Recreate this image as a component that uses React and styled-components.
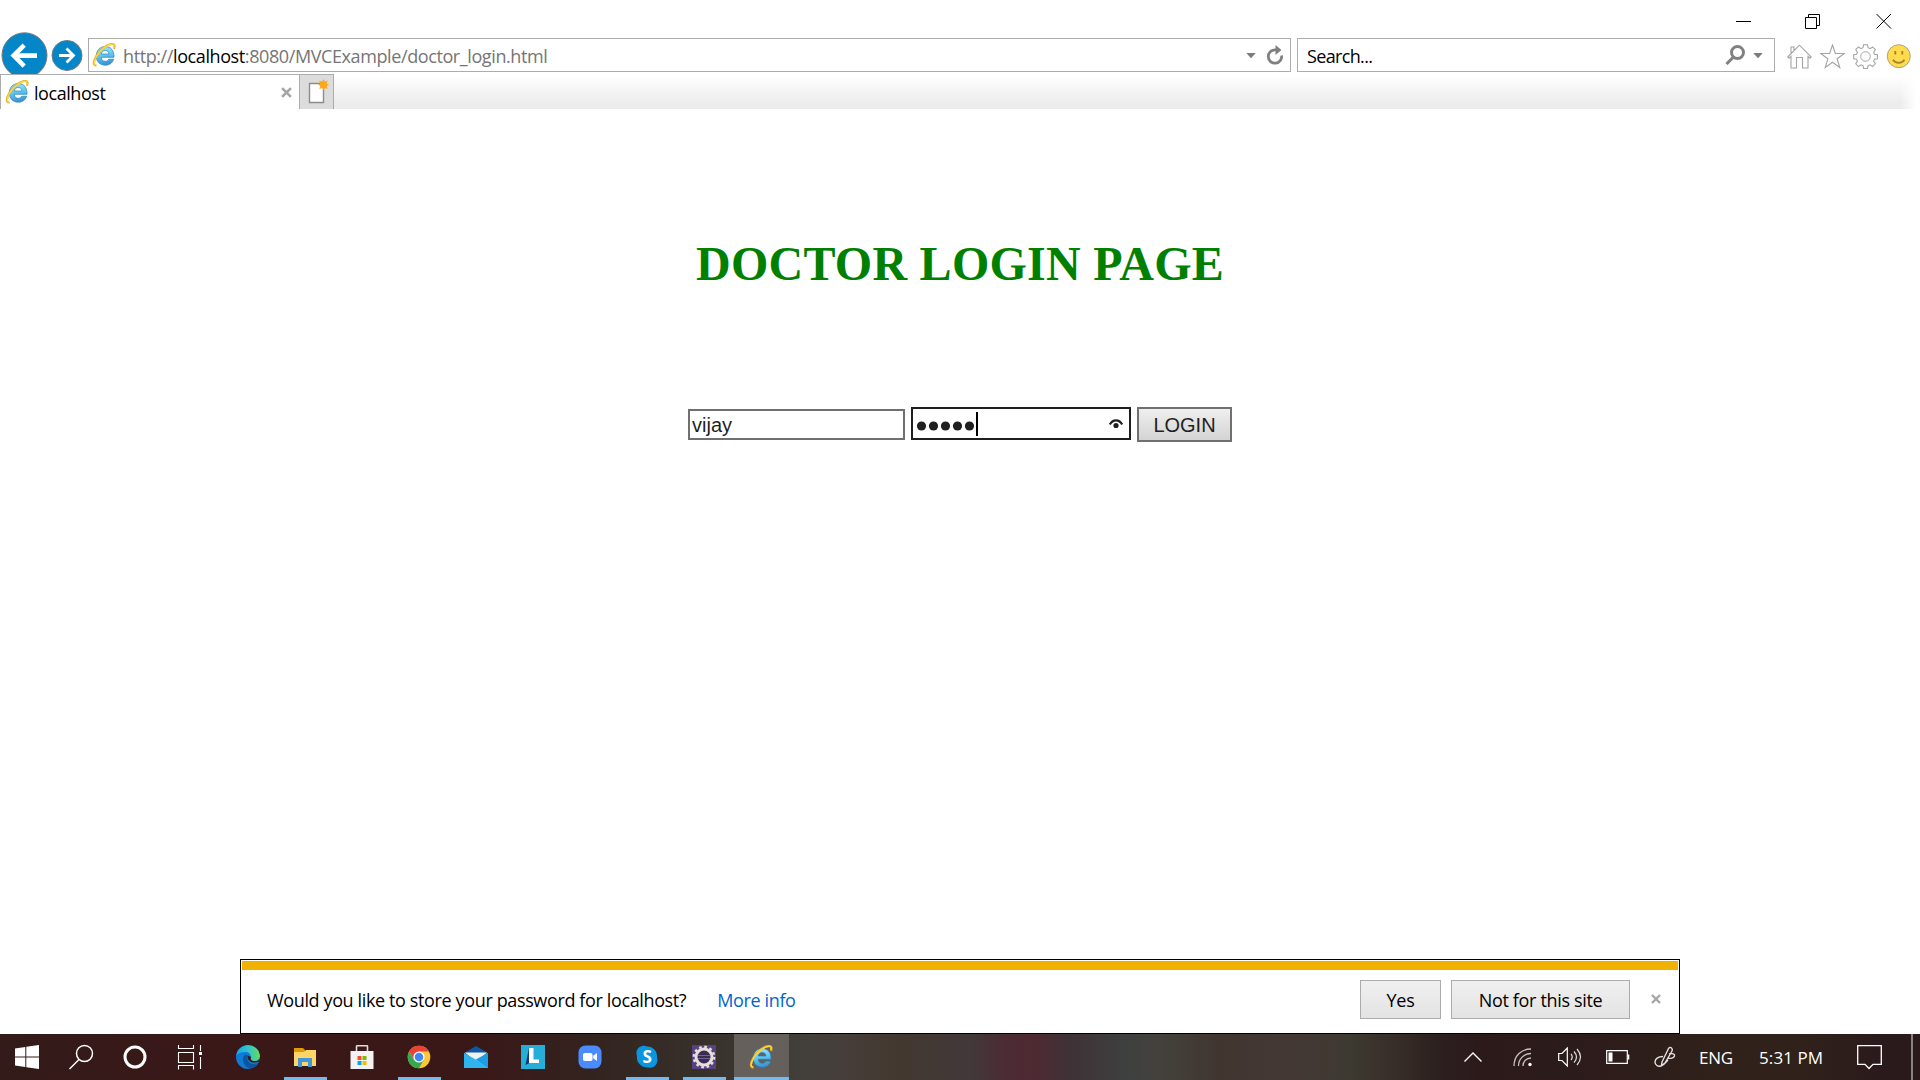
import React from 'react';
import styled, { createGlobalStyle } from 'styled-components';

const Global = createGlobalStyle`
  * { box-sizing: border-box; }
  body { margin: 0; background: #fff; overflow: hidden; }
  svg { display: block; flex: none; }
  button { margin: 0; font: inherit; }
`;
const ui = `"Open Sans", "Noto Sans", sans-serif`;

const Screen = styled.div`
  width: 1920px; height: 1080px; display: flex; flex-direction: column;
  background: #fff; font-family: ${ui}; color: #000; overflow: hidden;
`;
const TitleBar = styled.header`
  height: 38px; display: flex; justify-content: flex-end; gap: 53px;
  padding: 13px 28px 0 0;
  svg:last-child { margin-left: 2px; }
`;
const NavBar = styled.nav`height: 36px; display: flex; align-items: flex-start;`;
const NavButtons = styled.div`
  width: 88px; height: 36px; overflow: visible;
  svg { margin-top: -7px; }
`;
const Field = styled.div`
  width: ${p => p.$w}px; height: 34px; border: 1px solid #acacac; background: #fff;
  display: flex; align-items: center; margin-right: ${p => p.$gap}px;
  padding: 0 ${p => p.$pr}px 0 ${p => p.$pl}px;
`;
const Label = styled.span`
  font-size: ${p => p.$size || 18}px; letter-spacing: ${p => p.$ls || 0}px; line-height: 24px;
  color: ${p => p.$color || '#000'}; white-space: pre; margin-left: ${p => p.$ml || 0}px;
  padding-top: ${p => p.$pt || 0}px;
`;
const Host = styled.b`font-weight: 400; color: #000;`;
const Spacer = styled.div`flex: 1;`;
const Gap = styled.div`flex: 0 0 ${p => p.$w}px;`;
const Tools = styled.div`display: flex; gap: 8px; padding-top: 6px;`;

const TabRow = styled.div`
  height: 35px; display: flex; position: relative;
  background: linear-gradient(#fff 5%, #f5f5f5 45%, #ececec 85%);
  &::after {
    content: ''; position: absolute; right: 0; top: 0; width: 20px; height: 35px;
    background: linear-gradient(90deg, #fff0, #fff 80%);
  }
`;
const Tab = styled.div`
  width: 300px; border: 1px solid #acacac; border-bottom: 0; background: #fff;
  display: flex; align-items: center; padding: 0 7px 0 4px;
`;
const NewTab = styled.div`
  width: 34px; border: 1px solid #acacac; border-width: 1px 1px 0 0; background: #dcdcdc;
  padding: 4px 0 0 7px;
`;

const Page = styled.main`flex: 1; display: flex; flex-direction: column; align-items: center;`;
const Title = styled.h1`
  margin: 126px 0 0; height: 58px; font: bold 48px/58px "Liberation Serif", serif;
  letter-spacing: 0.26px; color: #008000; white-space: nowrap;
`;
const Form = styled.div`
  display: flex; align-items: center; margin-top: 114px; height: 35px; gap: 6px;
  font: 20px "Liberation Sans", sans-serif; color: #1f1f1f;
`;
const Input = styled.div`
  width: ${p => p.$w}px; height: ${p => p.$h}px; border: 2px solid ${p => p.$c}; background: #fff;
  display: flex; align-items: center; padding: 1px 6px 0 2px; line-height: 24px;
  margin-top: ${p => p.$mt || 0}px;
`;
const Submit = styled.button`
  width: 95px; height: 35px; border: 2px solid #707070; padding: 2px 0 0; color: #1f1f1f;
  background: linear-gradient(#efefef, #d4d4d4);
`;

const Notice = styled.section`
  width: 1440px; height: 75px; border: 1px solid #000; margin-left: 240px; background: #fff;
  padding: 1px 1px 0;
`;
const Stripe = styled.div`height: 9px; background: #f2b000;`;
const NoticeBody = styled.div`height: 58px; display: flex; align-items: center; padding: 0 17px 0 25px;`;
const NoticeButton = styled.button`
  width: ${p => p.$w}px; height: 39px; border: 1px solid #acacac; padding: 2px 0 0;
  background: linear-gradient(#f0f0f0, #e3e3e3); margin-right: ${p => p.$mr}px;
`;

const Taskbar = styled.footer`
  height: 46px; display: flex; align-items: stretch; color: #fff;
  background: linear-gradient(90deg, #321b19 0, #3a1818 200px, #3a1818 480px, #33231f 590px, #37302a 700px, #423f3b 800px,
    #453e3a 840px, #43382f 900px, #41393a 970px, #4c2b34 1005px, #4e2932 1035px, #3e3237 1070px, #3e403f 1125px,
    #43413c 1160px, #40362f 1220px, #443835 1290px, #3d3a31 1350px, #362c27 1400px, #2c1f1f 1440px, #2c1a1b 1480px,
    #2d1c1b 1600px, #30211a 1720px, #30211a 1800px, #2b1a1b 1880px, #2b1a1b 1920px);
`;
const Task = styled.div`
  width: 54px; display: flex; align-items: center; justify-content: center;
`;
const AppButton = styled.div`
  width: ${p => (p.$active ? 55 : 43)}px; margin: 0 ${p => (p.$active ? 1 : 7)}px; height: 46px;
  display: flex; align-items: center; justify-content: center;
  background: ${p => (p.$active ? '#65605c' : 'transparent')};
  border-bottom: 3px solid ${p => (p.$open ? '#76b9ed' : 'transparent')};
  background-clip: padding-box; padding: 3px 1px 0 0;
`;
const Tray = styled.div`display: flex; align-items: center; margin-left: auto; width: 456px;`;
const TrayItem = styled.div`width: ${p => p.$w}px; display: flex; align-items: center;`;
const ShowDesktop = styled.div`width: 7px; height: 46px; border-left: 2px solid #8a8280;`;

const IE = ({ s = 24, id }) => (
  <svg width={s} height={s} viewBox="0 0 24 24">
    <defs>
      <linearGradient id={id} x1="0" y1="0" x2="0.2" y2="1">
        <stop offset="0" stopColor="#a5e9fd" /><stop offset=".5" stopColor="#62caf3" /><stop offset="1" stopColor="#3a98d6" />
      </linearGradient>
    </defs>
    <path d="M22 14.3H9.2c.2 2.6 1.7 4 4 4 1.800 0 2.900-.8 3.500-2.100h5c-1.200 3.800-4.300 6-8.400 6-5.400 0-9-3.600-9-9.200 0-5.500 3.600-9.500 9-9.500 5.600 0 9 4 8.700 10.800ZM9.300 11h7.700c-.2-2.200-1.500-3.500-3.700-3.500-2.300 0-3.600 1.300-4 3.500Z" fill={`url(#${id})`} stroke="#2c80b8" strokeWidth=".7" />
    <path d="M4.500 22.300C1.500 22.800.6 19.500 4.300 13 8.200 6.200 15.500.8 20.300 1c2.300.1 2.700 2 1.700 4.800" fill="none" stroke="#eab02a" strokeWidth="2.200" />
    <path d="M4.300 21.900C1.800 22 1.400 19 4.600 13.200 8.500 6.500 15.500 1.300 20.200 1.400c1.800.1 2.100 1.400 1.500 3.400" fill="none" stroke="#ffd83a" strokeWidth="1.300" />
  </svg>
);
const Cross = ({ s = 10, w = 2.4, c = '#a6a6a6' }) => (
  <svg width={s} height={s} viewBox="0 0 10 10"><path d="M1 1l8 8M9 1l-8 8" stroke={c} strokeWidth={w} /></svg>
);
const Caret = () => <svg width="10" height="8" viewBox="0 0 10 8"><path d="M.3 2h9.400L5 7.300Z" fill="#7b7b7b" /></svg>;

export default function App() {
  return (
    <Screen>
      <Global />
      <TitleBar>
        <svg width="16" height="16"><path d="M0 8.500h15" stroke="#000" /></svg>
        <svg width="16" height="17"><path d="M.5 4.500h11v11H.5zM3.500 4.500v-3h11v11h-3" fill="none" stroke="#000" /></svg>
        <svg width="16" height="17"><path d="M.5 1l14.500 14.500M15 1L.5 15.500" stroke="#000" /></svg>
      </TitleBar>
      <NavBar>
        <NavButtons>
          <svg width="88" height="43" viewBox="0 31 88 43">
            <circle cx="24.500" cy="55.300" r="22.500" fill="#0586c8" stroke="#77797b" />
            <path d="M37 55.600H14M24.200 45.100L13.700 55.600 24.200 66.100" fill="none" stroke="#fff" strokeWidth="4.600" />
            <circle cx="67" cy="55.500" r="15" fill="#0586c8" stroke="#77797b" />
            <path d="M59 55.500h14M66.500 48.500l7 7-7 7" fill="none" stroke="#fff" strokeWidth="2.800" />
          </svg>
        </NavButtons>
        <Field $w={1203} $gap={6} $pl={3} $pr={6}>
          <IE id="ieAddr" />
          <Label $ml={7} $color="#757575" $ls={-0.4} $pt={2}>http://<Host>localhost</Host>:8080/MVCExample/doctor_login.html</Label>
          <Spacer />
          <Caret />
          <Gap $w={10} />
          <svg width="18" height="20" viewBox="0 0 18 20"><path d="M15.600 10.500A6.700 6.700 0 1 1 9 4.800h2" fill="none" stroke="#808080" strokeWidth="2.800" /><path d="M9.500 0l6 5-6 5Z" fill="#808080" /></svg>
        </Field>
        <Field $w={478} $gap={12} $pl={9} $pr={11}>
          <Label $ls={-0.65} $pt={2}>Search...</Label>
          <Spacer />
          <svg width="20" height="20" viewBox="0 0 20 20"><circle cx="12.500" cy="7.500" r="6" fill="none" stroke="#808080" strokeWidth="2.900" /><path d="M8.500 12l-7 7" stroke="#808080" strokeWidth="3" /></svg>
          <Gap $w={8} />
          <Caret />
        </Field>
        <Tools>
          <svg width="25" height="25" viewBox="0 0 25 25"><path d="M.8 13L12.500 1.200 24.200 13l-1.200 1.200-2-1.800V24h-5.500V13.500h-6V24H4V12.400l-2 1.800ZM4 9.800V3h3v3.500" fill="#fff" stroke="#a4a4a4" strokeWidth="1.100" /></svg>
          <svg width="25" height="25" viewBox="0 0 25 25"><path d="M12.500 1l2.900 8.500h8.900l-7.200 5.300 2.700 8.700-7.300-5.300-7.300 5.300 2.700-8.700L.7 9.500h8.900Z" fill="#fff" stroke="#a4a4a4" strokeWidth="1.100" /></svg>
          <svg width="25" height="25" viewBox="0 0 25 25"><path d="M10.500 1h4l.6 3 2 .9 2.600-1.700 2.800 2.700-1.700 2.700.8 2 3 .6v4l-3 .5-.8 2 1.700 2.700-2.800 2.800-2.600-1.700-2 .8-.6 3h-4l-.6-3-2-.8-2.600 1.700-2.800-2.800 1.700-2.700-.8-2-3-.5v-4l3-.6.8-2-1.700-2.700 2.800-2.700 2.600 1.700 2-.9Z" transform="translate(.3 -.2) scale(.98)" fill="#fff" stroke="#a4a4a4" strokeWidth="1.100" /><circle cx="12.500" cy="12.500" r="4.800" fill="#fff" stroke="#a4a4a4" /></svg>
          <svg width="25" height="25" viewBox="0 0 25 25"><circle cx="12.800" cy="12.200" r="11.500" fill="#ffdb4d" stroke="#aaa181" /><path d="M9.300 7v3.500M16.300 7v3.500" stroke="#a08425" strokeWidth="1.800" /><path d="M7 15.800c2.500 4 9 4 11.500 0" fill="none" stroke="#a08425" strokeWidth="1.700" /></svg>
        </Tools>
      </NavBar>
      <TabRow>
        <Tab>
          <IE id="ieTab" />
          <Label $ml={5} $ls={-0.45} $pt={2}>localhost</Label>
          <Spacer />
          <Cross s={11} />
        </Tab>
        <NewTab>
          <svg width="24" height="28" viewBox="0 0 24 28"><path d="M2.500 4.500h14v19h-14Z" fill="#fff" stroke="#8c8c8c" strokeWidth="1.400" /><path d="M16.500 0l1.300 2.600 2.900-1-1 2.900 2.300 1.300-2.300 1.300 1 2.900-2.900-1-1.300 2.500-1.300-2.500-2.900 1 1-2.900-2.300-1.300 2.300-1.300-1-2.900 2.900 1Z" fill="#fba919" /></svg>
        </NewTab>
      </TabRow>
      <Page>
        <Title>DOCTOR LOGIN PAGE</Title>
        <Form>
          <Input $w={217} $h={31} $c="#707070">vijay</Input>
          <Input $w={220} $h={33} $c="#1f1f1f" $mt={-2}>
            <svg width="66" height="26" viewBox="0 0 66 26">
              {[0, 1, 2, 3, 4].map(i => <circle key={i} cx={6.500 + i * 12} cy="15" r="4.600" fill="#1f1f1f" />)}
              <path d="M62 1v24" stroke="#000" strokeWidth="2" />
            </svg>
            <Spacer />
            <svg width="14" height="12" viewBox="0 0 14 12"><path d="M.8 6.500C4 1 10 1 13.200 6.500" fill="none" stroke="#1f1f1f" strokeWidth="2.200" /><circle cx="7" cy="7.500" r="2.600" fill="#1f1f1f" /></svg>
          </Input>
          <Submit>LOGIN</Submit>
        </Form>
      </Page>
      <Notice>
        <Stripe />
        <NoticeBody>
          <Label $ls={-0.37} $pt={2}>Would you like to store your password for localhost?</Label>
          <Label $ml={31} $color="#0066cc" $ls={-0.37} $pt={2}>More info</Label>
          <Spacer />
          <NoticeButton $w={81} $mr={10}><Label $ls={-0.3}>Yes</Label></NoticeButton>
          <NoticeButton $w={179} $mr={21}><Label $ls={-0.33}>Not for this site</Label></NoticeButton>
          <Cross />
        </NoticeBody>
      </Notice>
      <Taskbar>
        <Task><svg width="24" height="24" viewBox="0 0 24 24"><path d="M0 3.400L10.300 2v9.500H0ZM11.300 1.800L24 0v11.500H11.300ZM0 12.500h10.300V22L0 20.600ZM11.300 12.500H24V24l-12.700-1.800Z" fill="#fff" /></svg></Task>
        <Task><svg width="26" height="26" viewBox="0 0 26 26"><circle cx="16.500" cy="9.500" r="8" fill="none" stroke="#fff" strokeWidth="1.500" /><path d="M11 15.500L1.500 25" stroke="#fff" strokeWidth="1.500" /></svg></Task>
        <Task><svg width="24" height="24" viewBox="0 0 24 24"><circle cx="12" cy="12" r="10" fill="none" stroke="#fff" strokeWidth="3" /></svg></Task>
        <Task><svg width="25" height="25" viewBox="0 0 25 25"><path d="M1.500 0v3.500h15V0M1.500 7.500h15v10h-15ZM1.500 24.500v-4h15v4M23.500 0v6M23.500 12v12" fill="none" stroke="#fff" strokeWidth="1.100" /><path d="M22 7h3v3h-3z" fill="#fff" /></svg></Task>
        <Gap $w={4} />
        <AppButton>
          <svg width="24" height="24" viewBox="0 0 24 24">
            <defs>
              <linearGradient id="edgeWave" x1="0" x2="1"><stop offset="0" stopColor="#1ba3e0" /><stop offset=".5" stopColor="#2fc3cf" /><stop offset="1" stopColor="#64dd55" /></linearGradient>
              <clipPath id="edgeDisc"><circle cx="12" cy="12" r="12" /></clipPath>
            </defs>
            <g clipPath="url(#edgeDisc)">
              <path d="M0 0h24v24H0z" fill="#0f7bd6" />
              <path d="M0 11C1 4 6 0 12 0c7 0 12 5 12 10.500 0 3.500-3 5.500-6 5.500-3.500 0-4.500-1.500-3.500-3 1-3-1-6-5-6-4 0-8 1.500-9.500 4Z" fill="url(#edgeWave)" />
              <path d="M9 9.500c-4 4-1.500 12.500 5 14 4-.3 7-2.500 8.500-5.500-5 2.500-10.500.5-11-4-.1-1.500.3-2.500 1-3.500Z" fill="#10549c" />
              <path d="M12 11.500c-1 4.500 4.500 8 12 5L25 12c-1 3-3.500 4-6 4-3.500 0-5-1.500-4-3 0-1.500-1.800-2.500-3-1.500Z" fill="#381718" />
            </g>
          </svg>
        </AppButton>
        <AppButton $open><svg width="24" height="24" viewBox="0 0 24 24"><path d="M1 3h9l2 2v4H1Z" fill="#e09a0a" /><path d="M1 7h10l2-2h10v16H1Z" fill="#ffd666" /><path d="M5 13h14v9h-4v-5H9v5H5Z" fill="#3f98dd" /></svg></AppButton>
        <AppButton><svg width="24" height="24" viewBox="0 0 24 24"><path d="M6.500 8V1.700q0-1 1-1h9q1 0 1 1V8" fill="none" stroke="#ddd" strokeWidth="1.600" /><path d="M.5 6h23v18H.5Z" fill="#f3f3f3" /><path d="M7.500 11h4v4h-4z" fill="#f25022" /><path d="M12.500 11h4v4h-4z" fill="#7fba00" /><path d="M7.500 16h4v4h-4z" fill="#00a4ef" /><path d="M12.500 16h4v4h-4z" fill="#ffb900" /></svg></AppButton>
        <AppButton $open><svg width="24" height="24" viewBox="0 0 24 24"><circle cx="12" cy="12" r="11.300" fill="#fcc934" /><path d="M2.200 6.400A11.300 11.300 0 0 1 21.800 6.400H12L7.200 14.800Z" fill="#ea4335" /><path d="M2.200 6.400A11.300 11.300 0 0 0 12 23.300l4.900-8.500H7.100Z" fill="#34a853" /><circle cx="12" cy="12" r="5.600" fill="#fff" /><circle cx="12" cy="12" r="4.300" fill="#4285f4" /></svg></AppButton>
        <AppButton><svg width="24" height="24" viewBox="0 0 24 24"><path d="M0 8L12 1l12 7-12 5Z" fill="#0d58a6" /><path d="M1 7.500h22L12 17Z" fill="#f1f1f1" /><path d="M0 8l12 6.500L24 8v15H0Z" fill="#3cc4f4" /><path d="M0 8l24 15H0Z" fill="#2fb4ee" /><path d="M24 8L12 14.500 24 23Z" fill="#1b9de2" /></svg></AppButton>
        <AppButton><svg width="24" height="24" viewBox="0 0 24 24"><path d="M0 0h24v24H0z" fill="#26add8" /><path d="M8 3L4.500 20l6-3Z" fill="#123a70" /><path d="M8 3h4.500v11.500H18V18H8Z" fill="#fff" /></svg></AppButton>
        <AppButton><svg width="24" height="24" viewBox="0 0 24 24"><rect x=".5" y=".5" width="23" height="23" rx="7" fill="#4a8cff" /><rect x="5" y="8" width="9.500" height="8" rx="1.800" fill="#fff" /><path d="M15.200 10.800L19 8v8l-3.800-2.800Z" fill="#fff" /></svg></AppButton>
        <AppButton $open><svg width="24" height="24" viewBox="0 0 24 24"><path d="M7 1c2-.7 4 .2 5 .6 6-.2 10.600 4.900 10 10.800 2 5.600-3 12-9 10C6.500 22.800 1 17.500 2 11 .3 7 2.500 2 7 1Z" fill="#0a95de" /><text x="12.200" y="18" fontFamily="Open Sans, sans-serif" fontSize="17" fontWeight="700" fill="#fff" textAnchor="middle">S</text></svg></AppButton>
        <AppButton $open><svg width="24" height="24" viewBox="0 0 24 24"><path d="M0 0h24v24H0z" fill="#59407e" /><circle cx="12" cy="12" r="8" fill="#3b2c57" stroke="#e4e0da" strokeWidth="3" /><circle cx="12" cy="12" r="10.200" fill="none" stroke="#e4e0da" strokeWidth="2.400" strokeDasharray="2.700 2.640" /><path d="M6 10.500h12M6 13.500h12" stroke="#75648f" /></svg></AppButton>
        <AppButton $open $active><IE id="ieTask" s={24} /></AppButton>
        <Tray>
          <TrayItem $w={49}><svg width="18" height="10" viewBox="0 0 18 10"><path d="M.5 9.500L9 1l8.500 8.500" fill="none" stroke="#fff" strokeWidth="1.400" /></svg></TrayItem>
          <TrayItem $w={45}><svg width="20" height="20" viewBox="0 0 20 20"><path d="M1 19C1 9 8 2 18 2M5.500 19C5.500 12 11 6.500 18 6.500M10 19c0-4.500 3.500-8 8-8" fill="none" stroke="#c9c3c2" strokeWidth="1.300" /><circle cx="17" cy="17.500" r="1.700" fill="#fff" /></svg></TrayItem>
          <TrayItem $w={48}><svg width="24" height="20" viewBox="0 0 24 20"><path d="M.7 6.500H4L9.300 1v18L4 13.500H.7Z" fill="none" stroke="#fff" strokeWidth="1.200" /><path d="M13 7q2.500 3 0 6M16 4.500q5 5.500 0 11M19 2q7 8 0 16" fill="none" stroke="#ddd" strokeWidth="1.200" /></svg></TrayItem>
          <TrayItem $w={48}><svg width="24" height="14" viewBox="0 0 24 14"><path d="M.7.700h20.600v12.600H.7Z" fill="none" stroke="#fff" strokeWidth="1.200" /><path d="M2.500 2.500h4v9h-4zM22 4.500h1.300v5H22z" fill="#fff" /></svg></TrayItem>
          <TrayItem $w={45}><svg width="22" height="22" viewBox="0 0 22 22"><path d="M8 16L14.500 2.500q1.500-2 3-.5t.5 3L11 17l-3.500 2.500ZM9 10.500c-5 0-8 2.500-8 5.500s3 5 6 4 4-3 7-6M15 8c4-1 6 0 5.500 2s-4 3-7 2" fill="none" stroke="#e6e2e1" strokeWidth="1.400" /></svg></TrayItem>
          <TrayItem $w={60}><Label $size={17} $color="#fff" $ls={-0.3} $pt={1}>ENG</Label></TrayItem>
          <TrayItem $w={98}><Label $size={17} $color="#fff" $ls={0.1} $pt={1}>5:31 PM</Label></TrayItem>
          <TrayItem $w={54}><svg width="25" height="25" viewBox="0 0 25 25"><path d="M.7.700h23.600v18.600H16L12 23.500 8 19.300H.7Z" fill="none" stroke="#fff" strokeWidth="1.300" /></svg></TrayItem>
          <ShowDesktop />
        </Tray>
      </Taskbar>
    </Screen>
  );
}
